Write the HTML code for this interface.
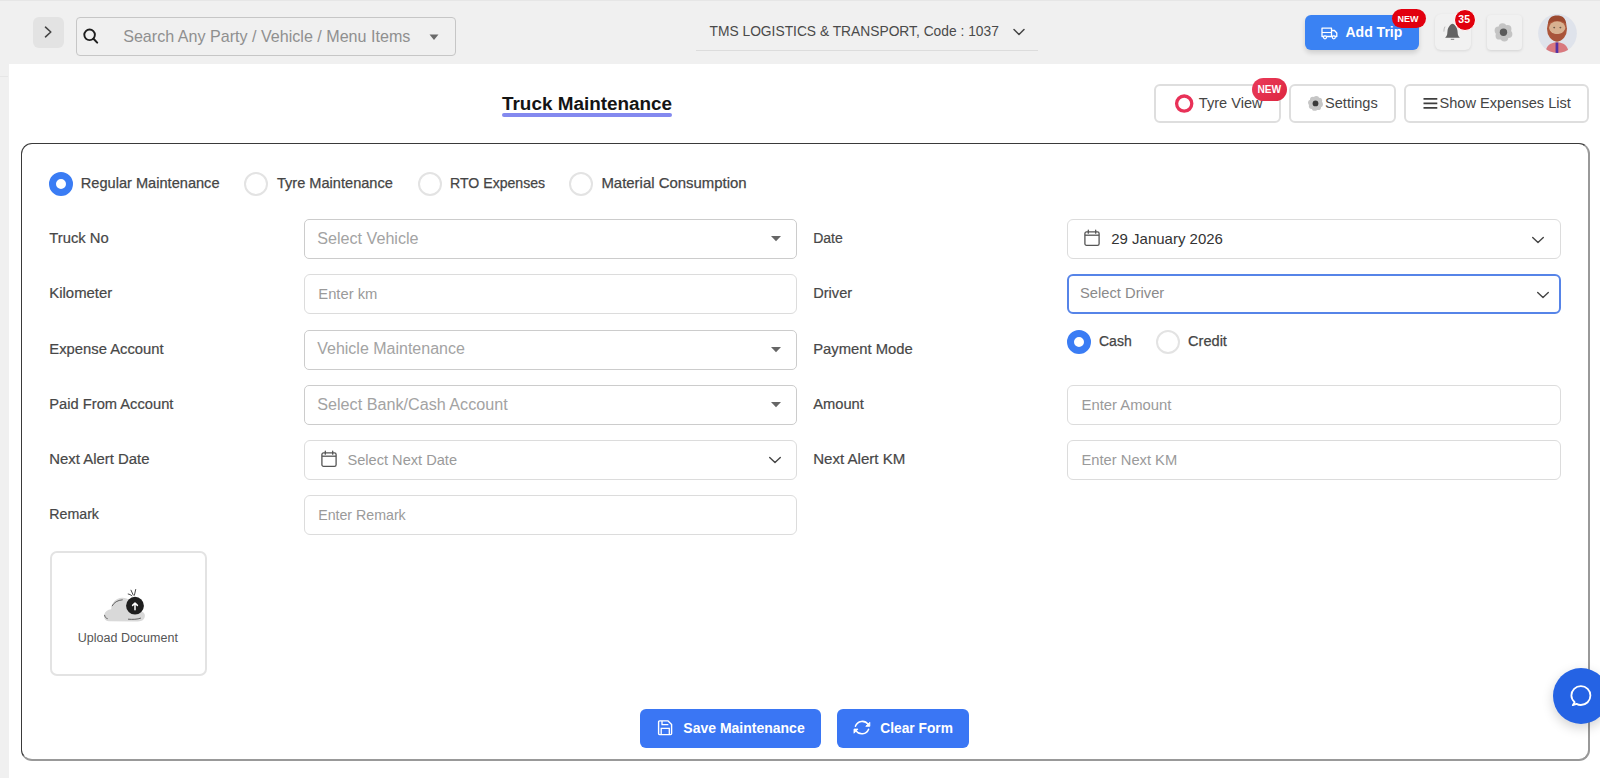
<!DOCTYPE html>
<html><head><meta charset="utf-8"><title>Truck Maintenance</title>
<style>
html,body{margin:0;padding:0;}
body{width:1600px;height:778px;overflow:hidden;position:relative;background:#fff;font-family:"Liberation Sans",sans-serif;}
.t{position:absolute;line-height:1;white-space:nowrap;}
svg{overflow:visible;}
</style></head><body>
<div style="position:absolute;left:0px;top:0px;width:1600px;height:64px;box-sizing:border-box;background:#f0f0f0;"></div>
<div style="position:absolute;left:0px;top:0px;width:1600px;height:1px;box-sizing:border-box;background:#e6e6e6;"></div>
<div style="position:absolute;left:0px;top:64px;width:9px;height:714px;box-sizing:border-box;background:#f0f0f0;"></div>
<div style="position:absolute;left:0px;top:76px;width:8px;height:1px;box-sizing:border-box;background:#e6e6e6;"></div>
<div style="position:absolute;left:33px;top:17px;width:31px;height:31px;box-sizing:border-box;background:#e3e3e3;border-radius:6px;"></div>
<svg style="position:absolute;left:40px;top:24px" width="16" height="16" viewBox="0 0 16 16"><path d="M5.5 3.2 L10.8 8 L5.5 12.8" fill="none" stroke="#444" stroke-width="1.6" stroke-linecap="round" stroke-linejoin="round"/></svg>
<div style="position:absolute;left:76px;top:17px;width:380px;height:39px;box-sizing:border-box;border:1px solid #c6c6c6;border-radius:4px;background:#f0f0f0;"></div>
<svg style="position:absolute;left:80px;top:26px" width="22" height="22" viewBox="0 0 22 22"><circle cx="9.6" cy="8.8" r="5.3" fill="none" stroke="#1e1e1e" stroke-width="1.9"/><path d="M13.5 12.8 L17.2 16.6" stroke="#1e1e1e" stroke-width="2" stroke-linecap="round"/></svg>
<div class="t" style="left:123.20px;top:28.00px;font-size:16.1px;color:#8f8f8f;">Search Any Party / Vehicle / Menu Items</div>
<svg style="position:absolute;left:428px;top:33px" width="12" height="8" viewBox="0 0 12 8"><path d="M1.5 1.5 L10.5 1.5 L6 7 Z" fill="#6a6a6a"/></svg>
<div class="t" style="left:709.50px;top:25.00px;font-size:13.8px;color:#4a4a4a;">TMS LOGISTICS &amp; TRANSPORT, Code : 1037</div>
<svg style="position:absolute;left:1011px;top:26px" width="16" height="12" viewBox="0 0 16 12"><path d="M3 3.5 L8 8.5 L13 3.5" fill="none" stroke="#444" stroke-width="1.5" stroke-linecap="round" stroke-linejoin="round"/></svg>
<div style="position:absolute;left:696px;top:50px;width:342px;height:1px;box-sizing:border-box;background:#dcdcdc;"></div>
<div style="position:absolute;left:1305px;top:15px;width:114px;height:35px;box-sizing:border-box;background:#3a82f3;border-radius:6px;box-shadow:0 3px 5px rgba(0,0,0,0.14);"></div>
<svg style="position:absolute;left:1320px;top:26px" width="19" height="14" viewBox="0 0 19 14"><path d="M2 2.2 H11.5 V10.5 H2 Z M11.5 4.5 H14.5 L16.8 7 V10.5 H11.5" fill="none" stroke="#fff" stroke-width="1.3" stroke-linejoin="round"/><path d="M2 6.5 H11.5" stroke="#fff" stroke-width="1.1"/><circle cx="5" cy="11.3" r="1.5" fill="#3a82f3" stroke="#fff" stroke-width="1.2"/><circle cx="13.8" cy="11.3" r="1.5" fill="#3a82f3" stroke="#fff" stroke-width="1.2"/></svg>
<div class="t" style="left:1345.50px;top:25.00px;font-size:14px;color:#fff;font-weight:700;">Add Trip</div>
<div style="position:absolute;left:1392px;top:9px;width:34px;height:19px;box-sizing:border-box;background:#e2000f;border-radius:10px;"></div>
<div class="t" style="left:1397.60px;top:15.00px;font-size:9px;color:#fff;font-weight:700;">NEW</div>
<div style="position:absolute;left:1435px;top:14px;width:36px;height:36px;box-sizing:border-box;background:#f1f1f1;border-radius:6px;box-shadow:0 1px 3px rgba(0,0,0,0.10);"></div>
<svg style="position:absolute;left:1442px;top:22px" width="22" height="22" viewBox="0 0 22 22"><path d="M10.5 1.8 C8.3 2.3 5.9 5.3 5.5 9 L5.2 12.3 C4.9 13.9 4 15 3.1 15.8 H17.9 C17 15 16.1 13.9 15.8 12.3 L15.5 9 C15.1 5.3 12.7 2.3 10.5 1.8 Z" fill="#636363"/><rect x="8.8" y="16.8" width="3.4" height="1.1" fill="#8a8a8a"/><path d="M3 4.6 C2.2 6 1.8 7.6 1.9 9.6" fill="none" stroke="#b0b0b0" stroke-width="0.8"/></svg>
<div style="position:absolute;left:1453.5px;top:9px;width:22px;height:22px;box-sizing:border-box;background:#e1000c;border-radius:50%;border:1.8px solid #fff;"></div>
<div class="t" style="left:1458.30px;top:14.00px;font-size:10.5px;color:#fff;font-weight:700;">35</div>
<div style="position:absolute;left:1486.5px;top:15px;width:35px;height:35px;box-sizing:border-box;background:#f1f1f1;border-radius:4px;box-shadow:0 1px 3px rgba(0,0,0,0.13);"></div>
<svg style="position:absolute;left:1487px;top:14px" width="35" height="36"><circle cx="15.58" cy="13.08" r="3.90" fill="#c4c4c4"/><circle cx="20.56" cy="14.89" r="3.90" fill="#c4c4c4"/><circle cx="21.48" cy="20.11" r="3.90" fill="#c4c4c4"/><circle cx="17.42" cy="23.52" r="3.90" fill="#c4c4c4"/><circle cx="12.44" cy="21.71" r="3.90" fill="#c4c4c4"/><circle cx="11.52" cy="16.49" r="3.90" fill="#c4c4c4"/><circle cx="16.5" cy="18.3" r="5.60" fill="#c4c4c4"/><circle cx="16.5" cy="18.3" r="3.70" fill="#5a5a5a"/></svg>
<svg style="position:absolute;left:1538px;top:13px" width="40" height="42" viewBox="0 0 40 42">
<defs><clipPath id="av"><circle cx="19.5" cy="20.5" r="19.4"/></clipPath></defs>
<circle cx="19.5" cy="20.5" r="19.4" fill="#dfe3eb"/>
<g clip-path="url(#av)">
<path d="M7 42 C7.5 34.5 10.5 29.6 19 29.3 C27.5 29.6 30.5 34.5 31 42 Z" fill="#d9797e"/>
<rect x="17.6" y="29.5" width="2.7" height="12" fill="#5231a3"/>
<ellipse cx="19" cy="15.8" rx="10" ry="12.6" fill="#ad573b"/>
<ellipse cx="19.2" cy="14.8" rx="8.2" ry="6.6" fill="#d8b190"/>
<path d="M11 16 C12 25 15.5 28.5 19 28.5 C22.5 28.5 26 25 27.2 16 C25 20.5 22.5 21 19 21 C15.5 21 13 20.5 11 16 Z" fill="#a8543a"/>
<ellipse cx="16.2" cy="14.6" rx="1" ry="0.8" fill="#6b5a4a"/>
<ellipse cx="22.4" cy="14.6" rx="1" ry="0.8" fill="#6b5a4a"/>
<path d="M10 11 C10 5 14 2.5 19 2.5 C24 2.5 28 5 28.2 11 C25 7.5 22 7.8 19 8 C15 8 12 8.5 10 11 Z" fill="#9c4a30"/>
</g></svg>
<div class="t" style="left:502.00px;top:95.00px;font-size:18.9px;color:#141414;font-weight:700;">Truck Maintenance</div>
<div style="position:absolute;left:502px;top:113px;width:170px;height:4px;box-sizing:border-box;background:#8389ef;border-radius:2px;"></div>
<div style="position:absolute;left:1154px;top:84px;width:127px;height:39px;box-sizing:border-box;border:2px solid #dedede;border-radius:6px;background:#fff;"></div>
<svg style="position:absolute;left:1172px;top:92px" width="24" height="24"><circle cx="12.2" cy="11.6" r="7.6" fill="none" stroke="#e83158" stroke-width="3.3"/></svg>
<div class="t" style="left:1198.80px;top:96.00px;font-size:14.6px;color:#454545;">Tyre View</div>
<div style="position:absolute;left:1252px;top:78px;width:35px;height:23px;border-radius:12px;background:linear-gradient(135deg,#ea3a5a,#dd2740);"></div>
<div class="t" style="left:1257.40px;top:85.00px;font-size:10.2px;color:#fff;font-weight:700;">NEW</div>
<div style="position:absolute;left:1289px;top:84px;width:107px;height:39px;box-sizing:border-box;border:2px solid #dedede;border-radius:6px;background:#fff;"></div>
<svg style="position:absolute;left:1300px;top:88px" width="30" height="30"><circle cx="20.03" cy="16.20" r="2.90" fill="#c6c6c6"/><circle cx="18.14" cy="19.17" r="2.90" fill="#c6c6c6"/><circle cx="14.70" cy="19.93" r="2.90" fill="#c6c6c6"/><circle cx="11.73" cy="18.04" r="2.90" fill="#c6c6c6"/><circle cx="10.97" cy="14.60" r="2.90" fill="#c6c6c6"/><circle cx="12.86" cy="11.63" r="2.90" fill="#c6c6c6"/><circle cx="16.30" cy="10.87" r="2.90" fill="#c6c6c6"/><circle cx="19.27" cy="12.76" r="2.90" fill="#c6c6c6"/><circle cx="15.5" cy="15.4" r="4.60" fill="#c6c6c6"/><circle cx="15.5" cy="15.4" r="2.90" fill="#3a3a3a"/></svg>
<div class="t" style="left:1325.00px;top:96.00px;font-size:14.6px;color:#454545;">Settings</div>
<div style="position:absolute;left:1404px;top:84px;width:185px;height:39px;box-sizing:border-box;border:2px solid #dedede;border-radius:6px;background:#fff;"></div>
<svg style="position:absolute;left:1420px;top:94px" width="20" height="18"><path d="M3.5 4.9 H17.3 M3.5 9.4 H17.3 M3.5 13.9 H17.3" stroke="#3f3f3f" stroke-width="1.6"/></svg>
<div class="t" style="left:1439.50px;top:96.00px;font-size:14.6px;color:#454545;">Show Expenses List</div>
<div style="position:absolute;left:21px;top:143px;width:1569px;height:618px;box-sizing:border-box;border-style:solid;border-width:1.5px 2px 2px 1.5px;border-color:#3a3a3a #999 #999 #3a3a3a;border-radius:11px;"></div>
<div style="position:absolute;left:49px;top:172px;width:24px;height:24px;box-sizing:border-box;border-radius:50%;border:7.5px solid #3a7cf4;background:#fff;"></div>
<div class="t" style="left:80.80px;top:176.00px;font-size:14.6px;color:#454545;-webkit-text-stroke:0.25px #454545;">Regular Maintenance</div>
<div style="position:absolute;left:244px;top:172px;width:24px;height:24px;box-sizing:border-box;border-radius:50%;border:2px solid #e3e3e3;background:#fff;"></div>
<div class="t" style="left:276.90px;top:176.00px;font-size:14.6px;color:#454545;-webkit-text-stroke:0.25px #454545;">Tyre Maintenance</div>
<div style="position:absolute;left:418px;top:172px;width:24px;height:24px;box-sizing:border-box;border-radius:50%;border:2px solid #e3e3e3;background:#fff;"></div>
<div class="t" style="left:450.10px;top:176.00px;font-size:14.1px;color:#454545;-webkit-text-stroke:0.25px #454545;">RTO Expenses</div>
<div style="position:absolute;left:569px;top:172px;width:24px;height:24px;box-sizing:border-box;border-radius:50%;border:2px solid #e3e3e3;background:#fff;"></div>
<div class="t" style="left:601.40px;top:176.00px;font-size:14.95px;color:#454545;-webkit-text-stroke:0.25px #454545;">Material Consumption</div>
<div class="t" style="left:49.30px;top:231.00px;font-size:14.8px;color:#474747;-webkit-text-stroke:0.2px #474747;">Truck No</div>
<div class="t" style="left:49.30px;top:286.00px;font-size:14.9px;color:#474747;-webkit-text-stroke:0.2px #474747;">Kilometer</div>
<div class="t" style="left:49.30px;top:342.00px;font-size:14.8px;color:#474747;-webkit-text-stroke:0.2px #474747;">Expense Account</div>
<div class="t" style="left:49.30px;top:397.00px;font-size:14.7px;color:#474747;-webkit-text-stroke:0.2px #474747;">Paid From Account</div>
<div class="t" style="left:49.30px;top:452.00px;font-size:14.9px;color:#474747;-webkit-text-stroke:0.2px #474747;">Next Alert Date</div>
<div class="t" style="left:49.30px;top:507.00px;font-size:14.2px;color:#474747;-webkit-text-stroke:0.2px #474747;">Remark</div>
<div class="t" style="left:813.20px;top:231.00px;font-size:14.0px;color:#474747;-webkit-text-stroke:0.2px #474747;">Date</div>
<div class="t" style="left:813.20px;top:286.00px;font-size:14.6px;color:#474747;-webkit-text-stroke:0.2px #474747;">Driver</div>
<div class="t" style="left:813.20px;top:342.00px;font-size:14.8px;color:#474747;-webkit-text-stroke:0.2px #474747;">Payment Mode</div>
<div class="t" style="left:813.20px;top:397.00px;font-size:14.7px;color:#474747;-webkit-text-stroke:0.2px #474747;">Amount</div>
<div class="t" style="left:813.20px;top:451.00px;font-size:15.08px;color:#474747;-webkit-text-stroke:0.2px #474747;">Next Alert KM</div>
<div style="position:absolute;left:304px;top:219px;width:493px;height:40px;box-sizing:border-box;border:1px solid #cccccc;border-radius:5px;background:#fff;"></div>
<div class="t" style="left:317.20px;top:230.00px;font-size:16.15px;color:#a3a3a3;">Select Vehicle</div>
<svg style="position:absolute;left:770px;top:235px" width="12" height="8" viewBox="0 0 12 8"><path d="M1 1 L11 1 L6 6.2 Z" fill="#666"/></svg>
<div style="position:absolute;left:304px;top:274px;width:493px;height:40px;box-sizing:border-box;border:1.5px solid #dcdcdc;border-radius:6px;background:#fff;"></div>
<div class="t" style="left:318.30px;top:287.00px;font-size:14.77px;color:#9a9a9a;">Enter km</div>
<div style="position:absolute;left:304px;top:330px;width:493px;height:40px;box-sizing:border-box;border:1px solid #cccccc;border-radius:5px;background:#fff;"></div>
<div class="t" style="left:317.20px;top:341.00px;font-size:16px;color:#a3a3a3;">Vehicle Maintenance</div>
<svg style="position:absolute;left:770px;top:346px" width="12" height="8" viewBox="0 0 12 8"><path d="M1 1 L11 1 L6 6.2 Z" fill="#666"/></svg>
<div style="position:absolute;left:304px;top:385px;width:493px;height:40px;box-sizing:border-box;border:1px solid #cccccc;border-radius:5px;background:#fff;"></div>
<div class="t" style="left:317.20px;top:396.00px;font-size:16.18px;color:#a3a3a3;">Select Bank/Cash Account</div>
<svg style="position:absolute;left:770px;top:401px" width="12" height="8" viewBox="0 0 12 8"><path d="M1 1 L11 1 L6 6.2 Z" fill="#666"/></svg>
<div style="position:absolute;left:304px;top:440px;width:493px;height:40px;box-sizing:border-box;border:1.5px solid #dcdcdc;border-radius:6px;background:#fff;"></div>
<svg style="position:absolute;left:319.5px;top:450px" width="18" height="18" viewBox="0 0 18 18"><rect x="1.9" y="2.9" width="14.2" height="13.4" rx="1.6" fill="none" stroke="#555" stroke-width="1.3"/><path d="M1.9 6.2 H16.1" stroke="#555" stroke-width="1.3"/><path d="M5.3 1.2 V4.2 M12.7 1.2 V4.2" stroke="#555" stroke-width="1.3" stroke-linecap="round"/></svg>
<div class="t" style="left:347.50px;top:453.00px;font-size:14.6px;color:#9a9a9a;">Select Next Date</div>
<svg style="position:absolute;left:766.5px;top:455px" width="16" height="10" viewBox="0 0 16 10"><path d="M2.7 2.6 L8 7.6 L13.3 2.6" fill="none" stroke="#444" stroke-width="1.4" stroke-linecap="round" stroke-linejoin="round"/></svg>
<div style="position:absolute;left:304px;top:495px;width:493px;height:40px;box-sizing:border-box;border:1.5px solid #dcdcdc;border-radius:6px;background:#fff;"></div>
<div class="t" style="left:318.20px;top:508.00px;font-size:14.2px;color:#9a9a9a;">Enter Remark</div>
<div style="position:absolute;left:1067px;top:219px;width:494px;height:40px;box-sizing:border-box;border:1.5px solid #dcdcdc;border-radius:6px;background:#fff;"></div>
<svg style="position:absolute;left:1082.5px;top:229px" width="18" height="18" viewBox="0 0 18 18"><rect x="1.9" y="2.9" width="14.2" height="13.4" rx="1.6" fill="none" stroke="#555" stroke-width="1.3"/><path d="M1.9 6.2 H16.1" stroke="#555" stroke-width="1.3"/><path d="M5.3 1.2 V4.2 M12.7 1.2 V4.2" stroke="#555" stroke-width="1.3" stroke-linecap="round"/></svg>
<div class="t" style="left:1111.20px;top:231.00px;font-size:15px;color:#333;">29 January 2026</div>
<svg style="position:absolute;left:1530px;top:234.5px" width="16" height="10" viewBox="0 0 16 10"><path d="M2.7 2.6 L8 7.6 L13.3 2.6" fill="none" stroke="#444" stroke-width="1.4" stroke-linecap="round" stroke-linejoin="round"/></svg>
<div style="position:absolute;left:1067px;top:274px;width:494px;height:40px;box-sizing:border-box;border:2px solid #5684e8;border-radius:6px;background:#fff;"></div>
<div class="t" style="left:1080.00px;top:286.00px;font-size:14.73px;color:#8a8a8a;">Select Driver</div>
<svg style="position:absolute;left:1534.5px;top:289.5px" width="16" height="10" viewBox="0 0 16 10"><path d="M2.7 2.6 L8 7.6 L13.3 2.6" fill="none" stroke="#444" stroke-width="1.4" stroke-linecap="round" stroke-linejoin="round"/></svg>
<div style="position:absolute;left:1067px;top:330px;width:24px;height:24px;box-sizing:border-box;border-radius:50%;border:7.5px solid #3a7cf4;background:#fff;"></div>
<div class="t" style="left:1099.00px;top:334.00px;font-size:14px;color:#454545;-webkit-text-stroke:0.25px #454545;">Cash</div>
<div style="position:absolute;left:1156px;top:330px;width:24px;height:24px;box-sizing:border-box;border-radius:50%;border:2px solid #e3e3e3;background:#fff;"></div>
<div class="t" style="left:1188.00px;top:334.00px;font-size:14.6px;color:#454545;-webkit-text-stroke:0.25px #454545;">Credit</div>
<div style="position:absolute;left:1067px;top:385px;width:494px;height:40px;box-sizing:border-box;border:1.5px solid #dcdcdc;border-radius:6px;background:#fff;"></div>
<div class="t" style="left:1081.50px;top:398.00px;font-size:14.85px;color:#9a9a9a;">Enter Amount</div>
<div style="position:absolute;left:1067px;top:440px;width:494px;height:40px;box-sizing:border-box;border:1.5px solid #dcdcdc;border-radius:6px;background:#fff;"></div>
<div class="t" style="left:1081.50px;top:453.00px;font-size:14.73px;color:#9a9a9a;">Enter Next KM</div>
<div style="position:absolute;left:50px;top:551px;width:157px;height:125px;box-sizing:border-box;border:2px solid #e3e3e3;border-radius:7px;background:#fff;"></div>
<svg style="position:absolute;left:98px;top:585px" width="56" height="42" viewBox="0 0 56 42">
<path d="M11 36.3 C6.5 36.3 5.6 32 6.3 29.5 C7 26.5 9.5 24.5 13.2 24.2 C13.6 17.5 18 13 24 12.8 C30 12.6 34.5 16.5 35.5 22 C37 24.5 42 25.5 45.5 27.5 C48 29.5 47 34.5 43.5 35.8 C41 36.6 38 36.6 36 36.6 Z" fill="#d9d9d9"/>
<path d="M14.2 20.8 C16 17.5 19.5 15.2 24.3 14.8" fill="none" stroke="#555" stroke-width="0.9" stroke-linecap="round"/>
<path d="M6.6 30.3 C6.9 32 7.8 33.2 9.3 33.6" fill="none" stroke="#555" stroke-width="0.9" stroke-linecap="round"/>
<path d="M30.4 34.2 C34.5 34.6 39.5 34.4 42.6 33.2" fill="none" stroke="#555" stroke-width="0.9" stroke-linecap="round"/>
<circle cx="37" cy="20.7" r="8.9" fill="#1e1e1e"/>
<path d="M37 24.8 V18.2 M34.6 20.4 L37 18 L39.4 20.4" fill="none" stroke="#fff" stroke-width="1.5" stroke-linecap="round" stroke-linejoin="round"/>
<path d="M30.2 9 C31.5 9.2 32.8 9.8 33.9 10.8 M33 5.2 L35.2 10 M37.7 4.5 L36.4 10.2" fill="none" stroke="#333" stroke-width="0.9" stroke-linecap="round"/>
</svg>
<div class="t" style="left:77.80px;top:632.00px;font-size:12.5px;color:#555;">Upload Document</div>
<div style="position:absolute;left:640px;top:709px;width:181px;height:39px;box-sizing:border-box;background:#3a76f4;border-radius:6px;"></div>
<svg style="position:absolute;left:655px;top:718px" width="20" height="20" viewBox="0 0 20 20"><path d="M4.6 2.9 H13.1 L16.6 6.4 V15.6 Q16.6 16.6 15.6 16.6 H4.6 Q3.6 16.6 3.6 15.6 V3.9 Q3.6 2.9 4.6 2.9 Z" fill="none" stroke="#fff" stroke-width="1.4" stroke-linejoin="round"/><path d="M7 3.1 V6.7 H13.4" fill="none" stroke="#fff" stroke-width="1.3"/><path d="M6.2 16.4 V10.4 H14.3 V16.4" fill="none" stroke="#fff" stroke-width="1.3"/></svg>
<div class="t" style="left:683.30px;top:721.00px;font-size:14px;color:#fff;font-weight:700;">Save Maintenance</div>
<div style="position:absolute;left:837px;top:709px;width:132px;height:39px;box-sizing:border-box;background:#3a76f4;border-radius:6px;"></div>
<svg style="position:absolute;left:851px;top:718px" width="22" height="20" viewBox="0 0 22 20"><path d="M4.4 8.3 A7.3 7.3 0 0 1 17.2 6.4 M17.6 11.2 A7.2 7.2 0 0 1 4.9 12.6" fill="none" stroke="#fff" stroke-width="1.5" stroke-linecap="round"/><path d="M18.8 4.3 V8.3 H14.8 Z M3 15.2 V11.1 H7 Z" fill="#fff" stroke="#fff" stroke-width="0.9" stroke-linejoin="round"/></svg>
<div class="t" style="left:880.30px;top:722.00px;font-size:13.75px;color:#fff;font-weight:700;">Clear Form</div>
<div style="position:absolute;left:1553px;top:668px;width:56px;height:56px;border-radius:50%;background:#2563e4;box-shadow:0 4px 12px rgba(0,0,0,0.18);"></div>
<svg style="position:absolute;left:1567px;top:682px" width="28" height="28" viewBox="0 0 28 28"><path d="M7.6 20.2 C5.6 18.3 4.4 16 4.4 13.6 C4.4 8.4 8.6 4.2 13.9 4.2 C19.2 4.2 23.4 8.4 23.4 13.6 C23.4 18.8 19.2 23 13.9 23 C12.3 23 10.8 22.6 9.5 21.9 L5.8 23.1 Z" fill="none" stroke="#fff" stroke-width="1.8" stroke-linejoin="round"/></svg>
</body></html>
